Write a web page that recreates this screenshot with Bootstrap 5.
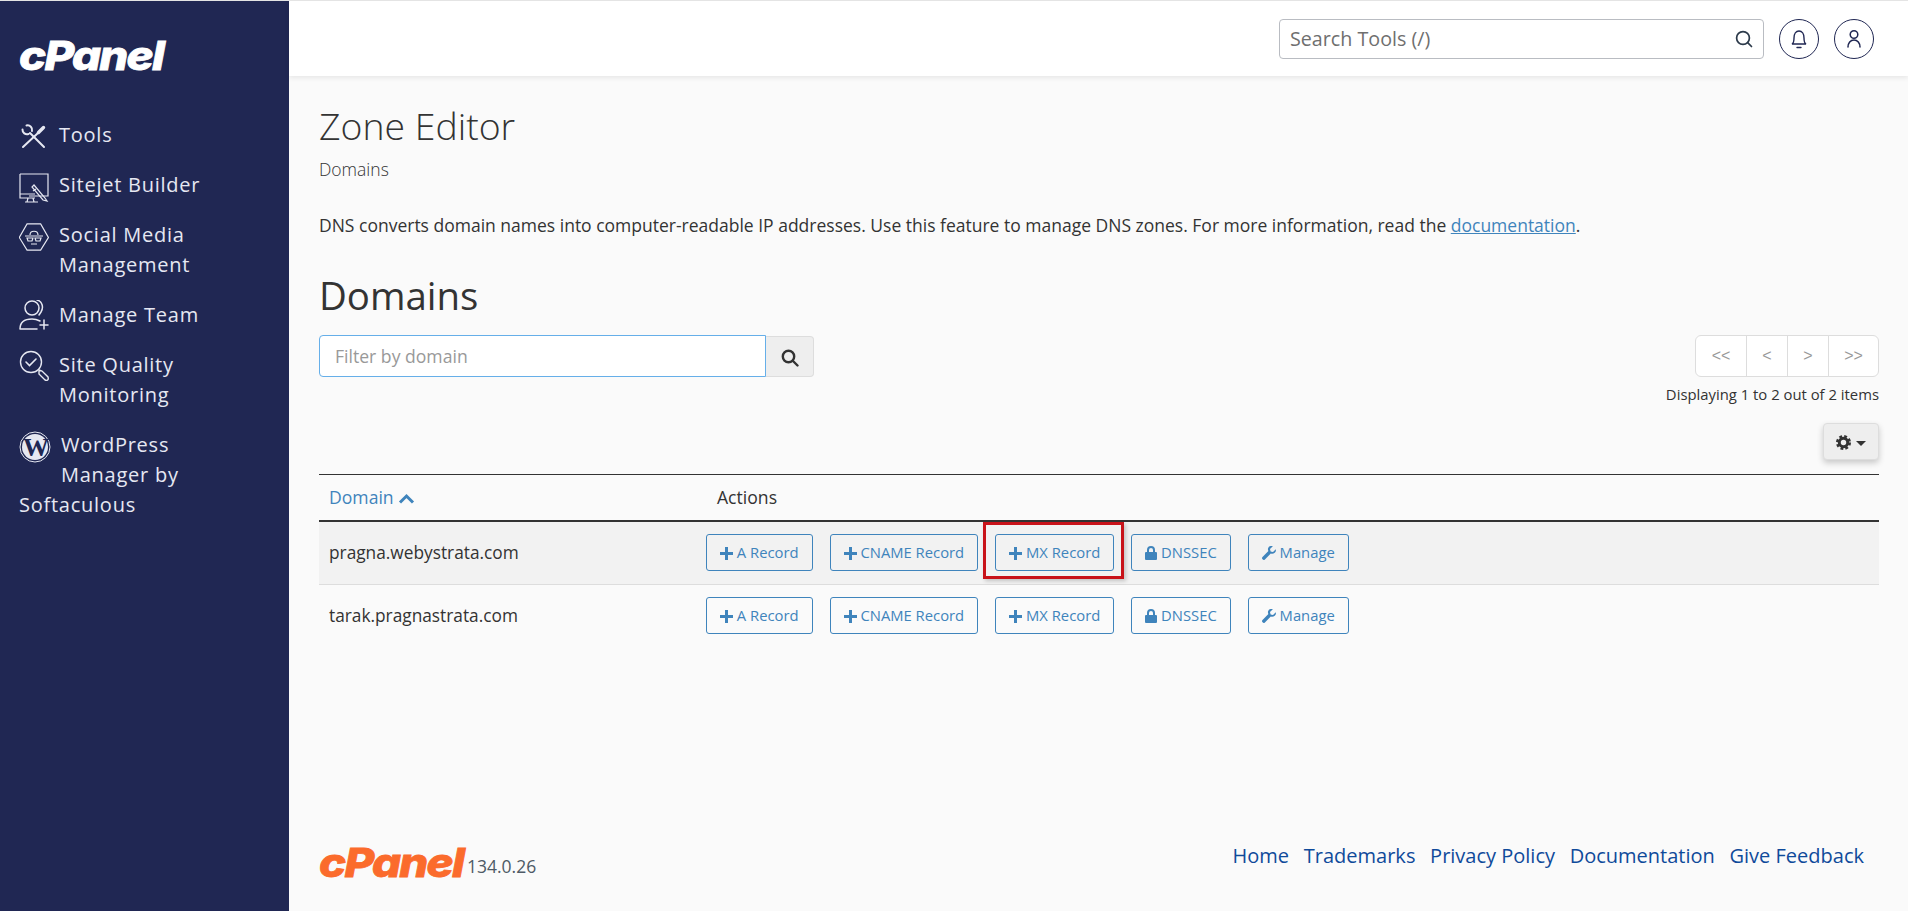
<!DOCTYPE html>
<html lang="en">
<head>
  <meta charset="UTF-8">
  <meta name="viewport" content="width=device-width, initial-scale=1.0">
  <title>Zone Editor | cPanel</title>
  <link href="https://cdn.jsdelivr.net/npm/bootstrap@5.3.0/dist/css/bootstrap.min.css" rel="stylesheet">
  <style>
    html, body { height: 100%; }
    body {
      background: #fafafa;
      color: #333;
      font-family: "Open Sans", sans-serif;
      overflow: hidden;
      border-top: 1px solid #e4e4e4;
    }
    .page-wrap { height: 910px; }

    .side-bar { width: 289px; background: #202753; flex: none; padding: 0 19px; }
    .cp-logo {
      font-family: Inter, sans-serif;
      font-weight: 800;
      font-style: italic;
      line-height: 1;
      display: inline-block;
      white-space: nowrap;
      transform: scaleX(1.14);
      transform-origin: left center;
    }
    .side-bar .cp-logo { color: #fff; font-size: 40px; letter-spacing: -1.5px; margin-top: 35px; -webkit-text-stroke: .8px #fff; }
    .side-menu { list-style: none; margin: 34px 0 0; padding: 0 30px 0 0; }
    .side-menu li { padding: 10px 0; font-size: 20px; line-height: 30px; letter-spacing: .75px; color: #e6e8f2; }
    .side-ico { float: left; width: 30px; height: 36px; margin-right: 10px; color: #e6e8f2; }
    .side-ico.wp-ico { width: 32px; height: 32px; margin-right: 10px; margin-top: 1px; margin-bottom: 7px; }

    .top-bar { height: 75px; background: #fff; box-shadow: 0 2px 5px rgba(0,0,0,.08); padding-right: 34px; flex: none; }
    .tool-search { width: 485px; height: 40px; border: 1px solid #b9bcc2; border-radius: 4px; padding: 0 10px 0 8px; background: #fff; }
    .tool-search input { border: 0; outline: 0; flex: 1; font-size: 19.7px; color: #555; background: transparent; min-width: 0; }
    .tool-search input::placeholder { color: #6f6f6f; }
    .round-btn { width: 40px; height: 40px; border: 1px solid #202753; border-radius: 50%; background: #fff; color: #202753; padding: 0; margin-left: 15px; }

    .content-pane { padding: 0 29px 0 30px; }
    .zone-title { font-size: 37.4px; font-weight: 300; line-height: 44px; margin: 28px 0 0; color: #333; }
    .zone-sub { font-size: 17.5px; font-weight: 300; line-height: 22px; margin: 10px 0 0; }
    .zone-intro { font-size: 17.5px; line-height: 24px; margin: 33px 0 0; }
    .zone-intro a { color: #3f84bc; }
    .zone-head { font-size: 38.4px; font-weight: 500; line-height: 44px; margin: 36px 0 0; color: #333; }

    .filter-box { width: 495px; height: 42px; margin-top: 2px; }
    .filter-box .form-control { border: 1px solid #66afe9; border-radius: 4px 0 0 4px; font-size: 17.6px; padding: 0 15px; height: 42px; box-shadow: none; }
    .filter-box .form-control::placeholder { color: #999; }
    .filter-go { width: 48px; height: 41px; background: #eee; border: 1px solid #ddd; border-left: 0; border-radius: 0 4px 4px 0; padding: 0; margin-top: 1px; color: #333; }

    .pager-group { height: 42px; margin-top: 2px; }
    .pager-group .page-link { height: 42px; line-height: 40px; padding: 0; text-align: center; color: #999; border-color: #ddd; background: #fff; font-size: 16px; font-family: "Liberation Sans", sans-serif; }
    .pager-group .page-item:nth-child(1) .page-link { width: 52px; }
    .pager-group .page-item:nth-child(2) .page-link,
    .pager-group .page-item:nth-child(3) .page-link { width: 42px; }
    .pager-group .page-item:nth-child(4) .page-link { width: 51px; }
    .pager-note { font-size: 14.85px; line-height: 20px; margin-top: 7px; }
    .gear-btn { width: 56px; height: 37px; background: #eee; border: 1px solid #ddd; border-radius: 4px; box-shadow: 0 3px 6px rgba(0,0,0,.2); padding: 0; margin-top: 19px; color: #333; }
    .gear-caret { display: inline-block; border: 5px solid transparent; border-top-color: #333; border-bottom: 0; margin-left: 5px; vertical-align: 2px; }

    .zone-table { margin: 14px 0 0; --bs-table-bg: transparent; color: #333; border-top: 1px solid #333; }
    .zone-table > thead > tr > th { font-weight: 400; font-size: 17.6px; line-height: 24px; padding: 10px 10px 11px; border-bottom: 2px solid #333; vertical-align: middle; color: #333; }
    .zone-table > thead a { color: #3f84bc; text-decoration: none; }
    .zone-table > tbody > tr > td { font-size: 17.3px; padding: 12px 10px; border-bottom: 1px solid #ddd; vertical-align: middle; height: 63px; color: #333; }
    .zone-table > tbody > tr:nth-child(1) > td { background: #f2f2f2; }
    .zone-table > tbody > tr:last-child > td { border-bottom: 0; }
    .col-domain { width: 388px; }
    .act-row { display: flex; gap: 17px; margin-left: -11px; }
    .act-btn { height: 37px; padding: 0 13px; font-size: 14.8px; line-height: 35px; border: 1px solid #3f84bc; color: #3f84bc; border-radius: 3px; background: transparent; white-space: nowrap; }
    .act-btn svg { vertical-align: -2px; }
    .mark-wrap { position: relative; display: inline-block; }
    .red-mark { position: absolute; inset: -12px -10px -8px -12px; border: 3px solid #c8131a; box-shadow: 2px 2px 4px rgba(0,0,0,.2); pointer-events: none; }

    .page-foot { padding-bottom: 28px; }
    .page-foot .cp-logo { color: #fb6b2c; font-size: 40px; letter-spacing: -1.5px; -webkit-text-stroke: .8px #fb6b2c; width: 147px; }
    .foot-ver { font-size: 17.5px; color: #4e5a66; margin-left: 1px; margin-bottom: 4px; }
    .foot-links { gap: 14.7px; padding-right: 15px; font-size: 20px; margin-bottom: 12px; }
    .foot-links a { color: #0f4a9a; text-decoration: none; }
  </style>
</head>
<body>
<div class="d-flex page-wrap">

  <aside class="side-bar">
    <span class="cp-logo">cPanel</span>
    <ul class="side-menu">
      <li>
        <svg class="side-ico" viewBox="0 0 30 36" fill="none" stroke="currentColor" stroke-width="2" stroke-linecap="round"><path d="M3.500 9.500a4.500 4.500 0 0 0 6 4.500M7.500 5.500a4.500 4.500 0 0 1 5.500 5.500M11 13l14 14"/><path d="M4 27l15-14"/><path d="M19.500 12.500l5-5" stroke-width="3.400"/></svg>
        Tools
      </li>
      <li>
        <svg class="side-ico" viewBox="0 0 30 36" fill="none" stroke="currentColor" stroke-width="1.2"><path d="M1 4h28v22H10M1 4v24h15M1 24h15M9 28l-1 4M14 28l1 4M6 32h13"/><path d="M15 15l11 13 2 3-4-1-11-13zM17 19l-3 2"/></svg>
        Sitejet Builder
      </li>
      <li>
        <svg class="side-ico" viewBox="0 0 30 36" fill="none" stroke="currentColor" stroke-width="1.2"><path d="M8 3h14l8 14-8 13H8L0 17z" transform="translate(.3 1) scale(.97)"/><path d="M6 16h18M11 15c0-5 8-5 8 0M8 18l6 0-1 3h-4zM16 18l6 0-1 3h-4zM12 24h6"/></svg>
        Social Media Management
      </li>
      <li>
        <svg class="side-ico" viewBox="0 0 30 36" fill="none" stroke="currentColor" stroke-width="1.5" stroke-linecap="round"><circle cx="13" cy="8" r="7"/><path d="M18 0c5 1 7 7 4 12l-2 3M1 29c0-8 6-10 12-10 3 0 6 1 8 2M1 29h17M25 20v9M21 25h8"/></svg>
        Manage Team
      </li>
      <li>
        <svg class="side-ico" viewBox="0 0 30 36" fill="none" stroke="currentColor" stroke-width="1.4" stroke-linecap="round"><circle cx="12" cy="12" r="10.500"/><path d="M7 12l3.500 3.500L17 9" stroke-width="1.6"/><path d="M20 20l3 1 6 6c1 3-1 4-3 3l-6-6z"/></svg>
        Site Quality Monitoring
      </li>
      <li>
        <svg class="side-ico wp-ico" viewBox="0 0 32 32"><circle cx="16" cy="16" r="15" fill="none" stroke="currentColor" stroke-width="1"/><circle cx="16" cy="16" r="13" fill="currentColor"/><text x="16" y="25" text-anchor="middle" font-family="Liberation Serif, serif" font-weight="700" font-size="26" letter-spacing="-2" fill="#202753">W</text></svg>
        WordPress Manager by Softaculous
      </li>
    </ul>
  </aside>

  <div class="d-flex flex-column flex-grow-1" style="min-width:0">
    <header class="top-bar d-flex align-items-center justify-content-end">
      <div class="tool-search d-flex align-items-center">
        <input type="text" placeholder="Search Tools (/)">
        <svg width="18" height="18" viewBox="0 0 18 18" fill="none" stroke="#2c3a4a" stroke-width="1.7" stroke-linecap="round"><circle cx="8" cy="8" r="6.400"/><path d="M12.700 12.700L16.500 16.500"/></svg>
      </div>
      <button class="round-btn d-flex align-items-center justify-content-center" aria-label="Notifications">
        <svg width="18" height="20" viewBox="0 0 18 20" fill="none" stroke="currentColor" stroke-width="1.400" stroke-linecap="round"><path d="M2 15c2-1 2-3 2-6 0-4 2-7 5-7s5 3 5 7c0 3 0 5 2 6zM7 18.500h4"/></svg>
      </button>
      <button class="round-btn d-flex align-items-center justify-content-center" aria-label="Account">
        <svg width="18" height="20" viewBox="0 0 18 20" fill="none" stroke="currentColor" stroke-width="1.500" stroke-linecap="round"><circle cx="9" cy="5.500" r="3.800"/><path d="M3 18c0-4 2.500-7 6-7s6 3 6 7"/></svg>
      </button>
    </header>

    <main class="content-pane flex-grow-1 d-flex flex-column">
      <h1 class="zone-title">Zone Editor</h1>
      <p class="zone-sub">Domains</p>
      <p class="zone-intro">DNS converts domain names into computer-readable IP addresses. Use this feature to manage DNS zones. For more information, read the <a href="#">documentation</a>.</p>
      <h2 class="zone-head">Domains</h2>

      <div class="d-flex justify-content-between align-items-start mt-3">
        <div class="d-flex filter-box">
          <input type="text" class="form-control" placeholder="Filter by domain">
          <button class="filter-go flex-shrink-0" aria-label="Search">
            <svg width="18" height="18" viewBox="0 0 18 18" fill="none" stroke="currentColor" stroke-width="2.400" stroke-linecap="round"><circle cx="7.500" cy="7.500" r="5.700"/><path d="M12 12l4.500 4.500"/></svg>
          </button>
        </div>
        <div class="d-flex flex-column align-items-end">
          <ul class="pagination pager-group mb-0">
            <li class="page-item"><a class="page-link" href="#">&lt;&lt;</a></li>
            <li class="page-item"><a class="page-link" href="#">&lt;</a></li>
            <li class="page-item"><a class="page-link" href="#">&gt;</a></li>
            <li class="page-item"><a class="page-link" href="#">&gt;&gt;</a></li>
          </ul>
          <div class="pager-note">Displaying 1 to 2 out of 2 items</div>
          <button class="gear-btn" aria-label="Settings">
            <svg width="15" height="15" viewBox="0 0 16 16" style="vertical-align:-2px"><circle cx="8" cy="8" r="4.500" fill="none" stroke="currentColor" stroke-width="3.200"/><circle cx="8" cy="8" r="6.500" fill="none" stroke="currentColor" stroke-width="3" stroke-dasharray="2.900 2.200"/></svg><span class="gear-caret"></span>
          </button>
        </div>
      </div>

      <table class="table zone-table">
        <thead>
          <tr>
            <th class="col-domain"><a href="#">Domain <svg width="17" height="11" viewBox="0 0 17 11" fill="none" stroke="currentColor" stroke-width="3" style="vertical-align:0"><path d="M2 9.500l6.500-6.500 6.500 6.500"/></svg></a></th>
            <th>Actions</th>
          </tr>
        </thead>
        <tbody>
          <tr>
            <td>pragna.webystrata.com</td>
            <td>
              <div class="act-row">
                <button class="btn act-btn"><svg width="13" height="13" viewBox="0 0 13 13" fill="currentColor"><path d="M5 0h3v5h5v3H8v5H5V8H0V5h5z"/></svg> A Record</button>
                <button class="btn act-btn"><svg width="13" height="13" viewBox="0 0 13 13" fill="currentColor"><path d="M5 0h3v5h5v3H8v5H5V8H0V5h5z"/></svg> CNAME Record</button>
                <span class="mark-wrap">
                  <button class="btn act-btn"><svg width="13" height="13" viewBox="0 0 13 13" fill="currentColor"><path d="M5 0h3v5h5v3H8v5H5V8H0V5h5z"/></svg> MX Record</button>
                  <span class="red-mark"></span>
                </span>
                <button class="btn act-btn"><svg width="12" height="14" viewBox="0 0 12 14" fill="currentColor"><path d="M2 6V4a4 4 0 0 1 8 0v2h1a1 1 0 0 1 1 1v6a1 1 0 0 1-1 1H1a1 1 0 0 1-1-1V7a1 1 0 0 1 1-1zm2 0h4V4a2 2 0 0 0-4 0z"/></svg> DNSSEC</button>
                <button class="btn act-btn"><svg width="14" height="14" viewBox="0 0 14 14" fill="currentColor"><path d="M13.800 3.200 11 6l-2.400-.6L8 3l2.800-2.800C8.700-.6 6.400.5 6 2.600c-.2 1 0 1.800.4 2.500L.5 11a1.700 1.700 0 0 0 2.400 2.400l5.900-5.900c2.600 1 5.800-1.300 5-4.300z"/></svg> Manage</button>
              </div>
            </td>
          </tr>
          <tr>
            <td>tarak.pragnastrata.com</td>
            <td>
              <div class="act-row">
                <button class="btn act-btn"><svg width="13" height="13" viewBox="0 0 13 13" fill="currentColor"><path d="M5 0h3v5h5v3H8v5H5V8H0V5h5z"/></svg> A Record</button>
                <button class="btn act-btn"><svg width="13" height="13" viewBox="0 0 13 13" fill="currentColor"><path d="M5 0h3v5h5v3H8v5H5V8H0V5h5z"/></svg> CNAME Record</button>
                <button class="btn act-btn"><svg width="13" height="13" viewBox="0 0 13 13" fill="currentColor"><path d="M5 0h3v5h5v3H8v5H5V8H0V5h5z"/></svg> MX Record</button>
                <button class="btn act-btn"><svg width="12" height="14" viewBox="0 0 12 14" fill="currentColor"><path d="M2 6V4a4 4 0 0 1 8 0v2h1a1 1 0 0 1 1 1v6a1 1 0 0 1-1 1H1a1 1 0 0 1-1-1V7a1 1 0 0 1 1-1zm2 0h4V4a2 2 0 0 0-4 0z"/></svg> DNSSEC</button>
                <button class="btn act-btn"><svg width="14" height="14" viewBox="0 0 14 14" fill="currentColor"><path d="M13.800 3.200 11 6l-2.400-.6L8 3l2.800-2.800C8.700-.6 6.400.5 6 2.600c-.2 1 0 1.800.4 2.500L.5 11a1.700 1.700 0 0 0 2.400 2.400l5.900-5.900c2.600 1 5.800-1.300 5-4.300z"/></svg> Manage</button>
              </div>
            </td>
          </tr>
        </tbody>
      </table>

      <footer class="page-foot mt-auto d-flex justify-content-between align-items-end">
        <div class="d-flex align-items-end">
          <span class="cp-logo">cPanel</span>
          <span class="foot-ver">134.0.26</span>
        </div>
        <div class="foot-links d-flex">
          <a href="#">Home</a>
          <a href="#">Trademarks</a>
          <a href="#">Privacy Policy</a>
          <a href="#">Documentation</a>
          <a href="#">Give Feedback</a>
        </div>
      </footer>
    </main>
  </div>
</div>
<script src="https://cdn.jsdelivr.net/npm/bootstrap@5.3.0/dist/js/bootstrap.bundle.min.js"></script>
</body>
</html>
